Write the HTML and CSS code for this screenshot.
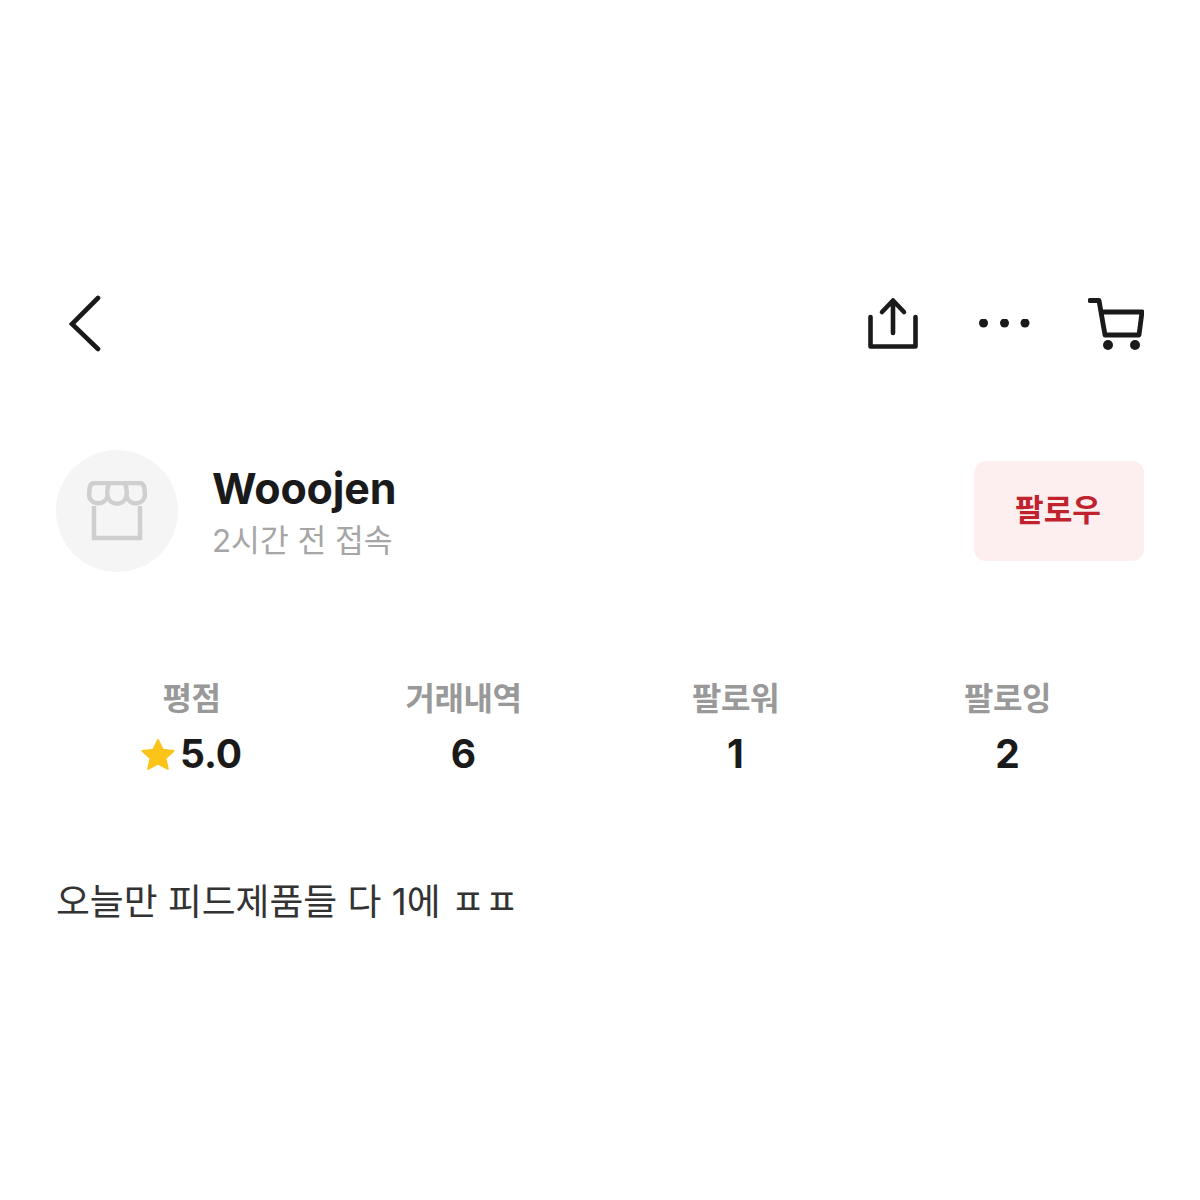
FILE: index.html
```html
<!DOCTYPE html>
<html lang="ko">
<head>
<meta charset="utf-8">
<title>Wooojen</title>
<link rel="stylesheet" href="styles.css">
</head>
<body>
<main class="page">
  <header class="topbar">
    <svg class="icon-back" width="34" height="58" viewBox="0 0 34 58"><path d="M30 3 L4 29 L30 54" fill="none" stroke="#1a1a1a" stroke-width="4.600" stroke-linecap="round" stroke-linejoin="miter"/></svg>
    <div class="actions">
      <svg class="icon-share" width="50" height="54" viewBox="0 0 50 54"><path d="M2.500 20 V49.500 H47.500 V20" fill="none" stroke="#1a1a1a" stroke-width="4.600" stroke-linecap="round" stroke-linejoin="round"/><path d="M25 36 V3.500 M14 15 L25 3.500 L36 15" fill="none" stroke="#1a1a1a" stroke-width="4.600" stroke-linecap="round" stroke-linejoin="round"/></svg>
      <svg class="icon-more" width="52" height="10" viewBox="0 0 52 10"><circle cx="4.500" cy="4" r="4.500" fill="#1a1a1a"/><circle cx="25.500" cy="4" r="4.500" fill="#1a1a1a"/><circle cx="46" cy="4" r="4.500" fill="#1a1a1a"/></svg>
      <svg class="icon-cart" width="56" height="54" viewBox="0 0 56 54"><path d="M2 3.500 H11 L17 38 H51 L54 15 H14" fill="none" stroke="#1a1a1a" stroke-width="4.800" stroke-linecap="round" stroke-linejoin="round"/><circle cx="20" cy="48" r="5" fill="#1a1a1a"/><circle cx="47" cy="48" r="5" fill="#1a1a1a"/></svg>
    </div>
  </header>

  <section class="profile">
    <div class="avatar">
      <svg width="60" height="60" viewBox="0 0 60 60"><path d="M7 25 V57 H53 V25" fill="none" stroke="#cfcfcf" stroke-width="4.500"/><path d="M8 2 H52 Q57 2 57.500 8 L58 15 A9.500 9.500 0 0 1 39.500 15 A9.700 9.700 0 0 1 20.500 15 A9.500 9.500 0 0 1 2 15 L2.500 8 Q3 2 8 2 Z M20.500 15 Q19.500 8 22 3 M39.500 15 Q40.500 8 38 3" fill="none" stroke="#cfcfcf" stroke-width="4.500" stroke-linejoin="round"/></svg>
    </div>
    <div class="identity">
      <h1 class="name">Wooojen</h1>
      <p class="seen">2시간 전 접속</p>
    </div>
    <button class="follow">팔로우</button>
  </section>

  <section class="stats">
    <div class="stat">
      <span class="stat-label">평점</span>
      <span class="stat-value"><svg class="star" width="34" height="33" viewBox="0 0 36 34"><path d="M18 1.500 L23 12 L34.500 13.300 L26 21 L28.400 32.300 L18 26.700 L7.600 32.300 L10 21 L1.500 13.300 L13 12 Z" fill="#fcc419" stroke="#fcc419" stroke-width="2" stroke-linejoin="round"/></svg>5.0</span>
    </div>
    <div class="stat">
      <span class="stat-label">거래내역</span>
      <span class="stat-value">6</span>
    </div>
    <div class="stat">
      <span class="stat-label">팔로워</span>
      <span class="stat-value">1</span>
    </div>
    <div class="stat">
      <span class="stat-label">팔로잉</span>
      <span class="stat-value">2</span>
    </div>
  </section>

  <p class="bio">오늘만 피드제품들 다 1에 ㅍㅍ</p>
</main>
</body>
</html>
```
FILE: styles.css
```css
* { box-sizing: border-box; }
html, body { margin: 0; padding: 0; background: #fff; }
body {
  font-family: Inter, "Noto Sans CJK KR", sans-serif;
  color: #1a1a1a;
}
.page {
  width: 1200px;
  height: 1200px;
  padding: 296px 56px 0;
}
.topbar {
  display: flex;
  align-items: center;
  justify-content: space-between;
  height: 56px;
  padding-left: 12px;
}
.actions {
  display: flex;
  align-items: center;
  gap: 57px;
}
.icon-more { margin-left: 4px; }
.profile {
  display: flex;
  align-items: center;
  margin-top: 98px;
  height: 122px;
}
.avatar {
  width: 122px;
  height: 122px;
  border-radius: 50%;
  background: #f5f5f5;
  display: flex;
  align-items: center;
  justify-content: center;
  flex: none;
}
.identity {
  margin-left: 34px;
  flex: 1;
  padding-top: 1px;
}
.name {
  margin: 0;
  font-size: 43px;
  line-height: 52px;
  font-weight: 700;
  letter-spacing: -0.2px;
  color: #1a1a1a;
}
.seen {
  margin: 7px 0 0;
  font-size: 31.3px;
  line-height: 40px;
  color: #a6a6a6;
}
.follow {
  width: 170px;
  height: 100px;
  border: 0;
  border-radius: 12px;
  background: #fdeeef;
  color: #c0232e;
  font: 700 31.2px/1 Inter, "Noto Sans CJK KR", sans-serif;
  padding: 0 2px 0 0;
}
.stats {
  display: grid;
  grid-template-columns: repeat(4, 1fr);
  margin-top: 107px;
}
.stat {
  display: flex;
  flex-direction: column;
  align-items: center;
}
.stat-label {
  font-size: 32px;
  line-height: 40px;
  font-weight: 700;
  letter-spacing: -0.5px;
  color: #999;
  padding-right: 1px;
}
.stat-value {
  display: flex;
  align-items: center;
  margin-top: 10px;
  font-size: 39px;
  line-height: 50px;
  font-weight: 700;
  color: #1a1a1a;
  padding-right: 1px;
}
.star { margin-right: 5px; }
.bio {
  margin: 97px 0 0;
  font-size: 36.8px;
  line-height: 52px;
  color: #333;
}
```
